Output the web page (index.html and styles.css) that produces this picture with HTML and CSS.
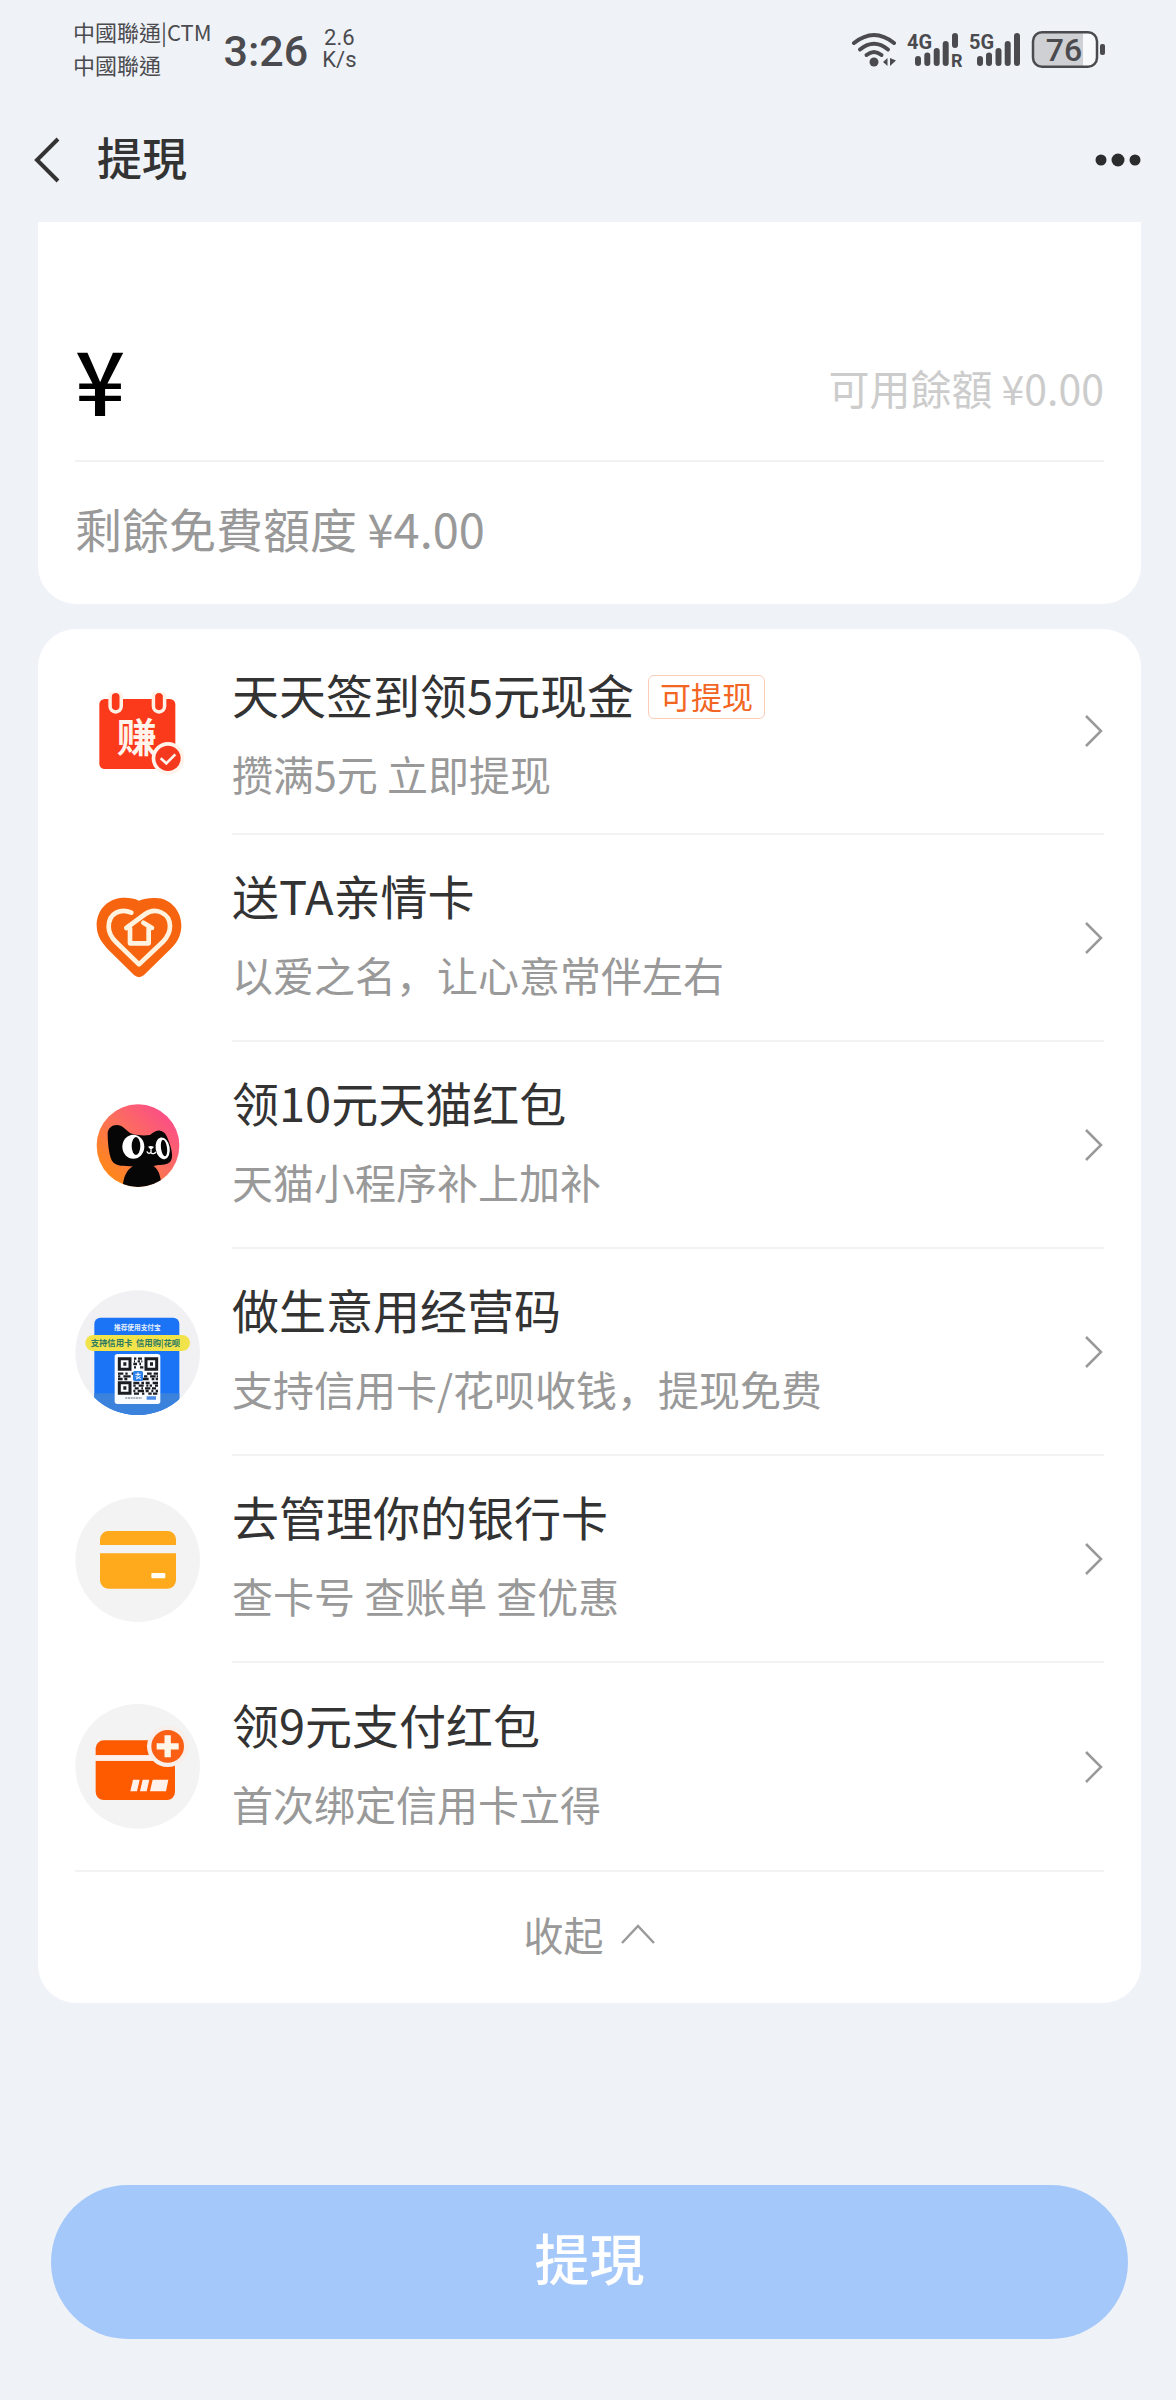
FILE: index.html
```html
<!DOCTYPE html>
<html lang="zh-Hant">
<head>
<meta charset="utf-8">
<meta name="viewport" content="width=device-width, initial-scale=1">
<title>提現</title>
<link rel="stylesheet" href="styles.css">
</head>
<body>
<div class="page">
  <div class="status">
    <div class="carriers"><span>中國聯通|CTM</span><span>中國聯通</span></div>
    <time class="clock">3:26</time>
    <div class="speed">2.6<br>K/s</div>
    <svg class="status-icons" viewBox="850 28 256 42" width="256" height="42" role="img" aria-label="Wi-Fi, 4G, 5G, 76%">
      <g fill="none" stroke="#4b4b4f" stroke-width="4" stroke-linecap="round">
        <path d="M854 43Q874 27 894 43"/>
        <path d="M860 49.500Q874 38 888 49.500"/>
        <path d="M866.500 55Q874 49 881.500 55"/>
      </g>
      <g fill="#4b4b4f">
        <circle cx="874" cy="62" r="4.500"/>
        <path d="M883 62l4.500-4v8zM896 60.500l-6 5.500v-8z"/>
      </g>
      <g stroke="#4b4b4f" stroke-width="6" stroke-linecap="round">
        <path d="M918 59v4M927.300 55.500v7.500M936.700 51v12M945.700 44v19M955 36v9"/>
        <path d="M980 59v4M989 55.500v7.500M998.500 51v12M1007.700 44v19M1017 36v27"/>
      </g>
      <g class="net" fill="#4b4b4f">
        <text x="907" y="49">4G</text>
        <text x="969" y="49">5G</text>
        <text class="net-small" x="951" y="67">R</text>
      </g>
      <rect x="1033" y="32" width="64" height="35" rx="9" fill="#f8f9fb"/>
      <path d="M1042 32h41v35h-41a9 9 0 0 1-9-9V41a9 9 0 0 1 9-9z" fill="#cfd0d3"/>
      <rect x="1033" y="32.300" width="64" height="34.500" rx="9" fill="none" stroke="#4b4b4f" stroke-width="2.500"/>
      <rect x="1100" y="44" width="5" height="11" rx="2" fill="#4b4b4f"/>
      <text class="level" x="1064" y="61" fill="#4b4b4f" text-anchor="middle">76</text>
    </svg>
  </div>

  <header class="nav">
    <button class="icon-button" type="button" aria-label="返回">
      <svg width="28" height="48" viewBox="0 0 28 48"><path d="M25 3L4 24l21 21" fill="none" stroke="#333" stroke-width="4"/></svg>
    </button>
    <h1 class="nav-title">提現</h1>
    <button class="icon-button" type="button" aria-label="更多">
      <svg width="46" height="14" viewBox="0 0 46 14" fill="#2b2c2e"><circle cx="6" cy="7" r="5.500"/><circle cx="23" cy="7" r="6.500"/><circle cx="40" cy="7" r="5.500"/></svg>
    </button>
  </header>

  <main class="content">
    <section class="card amount-card">
      <div class="amount">
        <label class="yen" for="amount">¥</label>
        <input class="amount-input" id="amount" type="text" inputmode="decimal" autocomplete="off">
        <span class="balance">可用餘額 ¥0.00</span>
      </div>
      <p class="quota">剩餘免費額度 ¥4.00</p>
    </section>

    <section class="card list-card" lang="zh-Hans">
      <ul class="list">
        <li><a class="item" href="#signin">
          <svg class="item-icon" viewBox="45 25 375 375" aria-hidden="true">
            <rect x="118" y="112" width="228" height="210" rx="16" fill="#fb3a1c"/>
            <g fill="none" stroke-linecap="round">
              <path d="M167 106v28M297 106v28" stroke="#fff1e6" stroke-width="44"/>
              <path d="M167 106v28M297 106v28" stroke="#fb3a1c" stroke-width="23"/>
            </g>
            <path d="M135 60h190v32H135z" fill="#fff"/>
            <path d="M156 106a11 11 0 0 1 22 0zM286 106a11 11 0 0 1 22 0z" fill="#fb3a1c"/>
            <text class="earn" x="230" y="270" text-anchor="middle" fill="#fff4ec">赚</text>
            <circle cx="324" cy="290" r="49" fill="#fff4ec"/>
            <circle cx="324" cy="290" r="38" fill="#f5391f"/>
            <path d="M302 290l17 15 27-27" fill="none" stroke="#fff4ec" stroke-width="8"/>
          </svg>
          <div class="item-main">
            <div class="item-text item-text-tagged">
              <div class="item-head"><span class="item-title">天天签到领5元现金</span><span class="tag">可提现</span></div>
              <span class="item-sub">攒满5元 立即提现</span>
            </div>
            <svg class="arrow" viewBox="0 0 20 34" aria-hidden="true"><path d="M2 2l15 15L2 32"/></svg>
          </div>
        </a></li>

        <li><a class="item" href="#family">
          <svg class="item-icon" viewBox="45 646 375 375" aria-hidden="true">
            <path d="M237 720C220 711 198 710 180 712C138 718 110 752 110 794C110 824 124 844 142 864L222 943Q237 956 252 943L334 863C352 845 364 824 364 794C364 750 330 712 288 712C270 711 252 713 237 720Z" fill="#f7640f"/>
            <g fill="none" stroke="#fff3df" stroke-width="14" stroke-linecap="round" stroke-linejoin="round">
              <path d="M214 756C184 742 146 756 146 798C146 820 158 834 168 844L237 911L308 844C320 832 330 818 330 796C330 758 286 738 256 760L199 802"/>
              <path d="M210 802v46h56v-46h10L250 786"/>
            </g>
          </svg>
          <div class="item-main">
            <div class="item-text">
              <span class="item-title">送TA亲情卡</span>
              <span class="item-sub">以爱之名，让心意常伴左右</span>
            </div>
            <svg class="arrow" viewBox="0 0 20 34" aria-hidden="true"><path d="M2 2l15 15L2 32"/></svg>
          </div>
        </a></li>

        <li><a class="item" href="#tmall">
          <svg class="item-icon" viewBox="45 38 375 375" aria-hidden="true">
            <defs>
              <linearGradient id="sunset" x1="0" y1="1" x2="1" y2="0"><stop offset=".1" stop-color="#ff8a10"/><stop offset=".5" stop-color="#fc705a"/><stop offset=".85" stop-color="#fb5085"/></linearGradient>
              <clipPath id="cat-clip"><circle cx="234" cy="226" r="124"/></clipPath>
            </defs>
            <circle cx="234" cy="226" r="124" fill="url(#sunset)"/>
            <g clip-path="url(#cat-clip)">
              <path d="M143 188C145 168 165 158 184 167C199 176 205 188 218 191C238 196 254 196 270 194C281 187 287 179 300 181C317 184 321 198 327 214C335 235 342 264 329 276C318 286 298 282 281 287C298 300 304 322 304 356H188C189 323 198 301 218 288C194 287 166 290 155 270C146 250 143 214 143 188Z" fill="#070606"/>
              <ellipse cx="220" cy="229" rx="33" ry="36" fill="#fff"/>
              <ellipse cx="308" cy="234" rx="21" ry="33" fill="#fff" transform="rotate(-10 308 234)"/>
              <ellipse cx="228" cy="227" rx="13" ry="27" fill="#070606"/>
              <ellipse cx="312" cy="233" rx="9" ry="25" fill="#070606" transform="rotate(-8 312 233)"/>
              <path d="M264 229q9-5 18 1l-9 9z" fill="#fff"/>
              <path d="M273 238v9M261 243q2 9 12 4q8 7 15-2" fill="none" stroke="#fff" stroke-width="4"/>
            </g>
          </svg>
          <div class="item-main">
            <div class="item-text">
              <span class="item-title">领10元天猫红包</span>
              <span class="item-sub">天猫小程序补上加补</span>
            </div>
            <svg class="arrow" viewBox="0 0 20 34" aria-hidden="true"><path d="M2 2l15 15L2 32"/></svg>
          </div>
        </a></li>

        <li><a class="item" href="#merchant">
          <svg class="item-icon" viewBox="45 660 375 375" aria-hidden="true">
            <defs><clipPath id="code-clip"><circle cx="233" cy="848" r="187"/></clipPath></defs>
            <circle cx="233" cy="848" r="187" fill="#f1f1f4"/>
            <g clip-path="url(#code-clip)">
              <rect x="103" y="743" width="255" height="310" rx="18" fill="#1b74f6"/>
              <path d="M103 970h255v80H103z" fill="#3a82dc"/>
              <text class="code-top" x="232" y="779" text-anchor="middle" fill="#e6f0ff">推荐使用支付宝</text>
              <rect x="76" y="795" width="314" height="48" rx="24" fill="#f3e34a"/>
              <text class="code-band" x="92" y="829" fill="#2c7a62">支持信用卡</text>
              <text class="code-band" x="228" y="829" fill="#2c7a62">信用购|花呗</text>
              <rect x="164" y="852" width="137" height="150" rx="8" fill="#f8fbff"/>
              <g fill="none" stroke="#1c1d22" stroke-width="9">
                <path d="M178 866h32v32h-32zM258 866h32v32h-32zM178 938h32v32h-32z"/>
                <path d="M190 882h9M270 882h9M190 954h9" stroke-width="11"/>
              </g>
              <g fill="none" stroke="#1c1d22" stroke-width="7">
                <path d="M222 866h28" stroke-dasharray="7 5 12 4"/>
                <path d="M222 874h28" stroke-dasharray="3 8 7 4"/>
                <path d="M220 882h30" stroke-dasharray="11 7 5 7"/>
                <path d="M222 892h28" stroke-dasharray="6 12 10"/>
                <path d="M174 911h120" stroke-dasharray="16 6 7 12 22 24 14 6"/>
                <path d="M174 919h120" stroke-dasharray="7 9 22 40 10 8 17 3"/>
                <path d="M174 927h120" stroke-dasharray="14 5 9 45 19 9 8 4"/>
                <path d="M220 939h74" stroke-dasharray="18 6 8 5 12 9"/>
                <path d="M220 947h74" stroke-dasharray="7 9 15 8 6 4"/>
                <path d="M224 955h70" stroke-dasharray="12 8 5 6 16 5"/>
                <path d="M220 963h74" stroke-dasharray="6 7 19 5 9 8"/>
                <path d="M222 971h70" stroke-dasharray="15 9 7 12 10 4"/>
              </g>
              <rect x="219" y="903" width="30" height="30" rx="5" fill="#2a80e8"/>
              <path d="M226 913h16M234 907v11M228 927q10-3 13-9M227 920q7 0 16 7" stroke="#fff" stroke-width="3" fill="none"/>
              <path d="M196 984h50" stroke="#8c97a8" stroke-width="5" stroke-dasharray="6 2"/>
              <path d="M260 984h28" stroke="#4a8ce8" stroke-width="10"/>
            </g>
          </svg>
          <div class="item-main">
            <div class="item-text">
              <span class="item-title">做生意用经营码</span>
              <span class="item-sub">支持信用卡/花呗收钱，提现免费</span>
            </div>
            <svg class="arrow" viewBox="0 0 20 34" aria-hidden="true"><path d="M2 2l15 15L2 32"/></svg>
          </div>
        </a></li>

        <li><a class="item" href="#cards">
          <svg class="item-icon" viewBox="45 50 375 375" aria-hidden="true">
            <circle cx="233" cy="238" r="187" fill="#f3f3f3"/>
            <path d="M120 194v-17a25 25 0 0 1 25-25h178a25 25 0 0 1 25 25v17zM120 219h228v81a25 25 0 0 1-25 25H145a25 25 0 0 1-25-25z" fill="#ffaa1c"/>
            <rect x="274" y="278" width="42" height="16" rx="3" fill="#fffdf5"/>
          </svg>
          <div class="item-main">
            <div class="item-text">
              <span class="item-title">去管理你的银行卡</span>
              <span class="item-sub">查卡号 查账单 查优惠</span>
            </div>
            <svg class="arrow" viewBox="0 0 20 34" aria-hidden="true"><path d="M2 2l15 15L2 32"/></svg>
          </div>
        </a></li>

        <li><a class="item" href="#bonus">
          <svg class="item-icon" viewBox="45 674 375 375" aria-hidden="true">
            <circle cx="233" cy="861" r="187" fill="#f3f3f3"/>
            <path d="M107 828v-21a24 24 0 0 1 24-24h190a24 24 0 0 1 24 24v21z" fill="#fe5a00"/>
            <path d="M107 844h238v94a24 24 0 0 1-24 24H131a24 24 0 0 1-24-24z" fill="#fe5a00"/>
            <path d="M107 828h238v16H107z" fill="#fff2ec"/>
            <path d="M219 901h20l-8 35h-20zM248 901h20l-8 35h-20zM278 901h47l-7 35h-48z" fill="#fff2ec"/>
            <circle cx="323" cy="801" r="62" fill="#f8eeea"/>
            <circle cx="323" cy="801" r="49" fill="#fa5f14"/>
            <path d="M323 768v66M290 801h66" stroke="#fff6ea" stroke-width="19"/>
          </svg>
          <div class="item-main">
            <div class="item-text">
              <span class="item-title">领9元支付红包</span>
              <span class="item-sub">首次绑定信用卡立得</span>
            </div>
            <svg class="arrow" viewBox="0 0 20 34" aria-hidden="true"><path d="M2 2l15 15L2 32"/></svg>
          </div>
        </a></li>
      </ul>
      <button class="collapse" type="button">收起
        <svg width="36" height="22" viewBox="0 0 36 22" aria-hidden="true"><path d="M2 20L18 3l16 17"/></svg>
      </button>
    </section>
  </main>

  <footer class="footer"><button class="submit" type="button">提現</button></footer>
</div>
</body>
</html>
```
FILE: styles.css
```css
* { box-sizing: border-box; }

body {
  margin: 0;
  background: #eff3f8;
  color: #333;
  font-family: "Noto Sans CJK SC", sans-serif;
}

:lang(zh-Hant) { font-family: "Noto Sans CJK TC", sans-serif; }
:lang(zh-Hans) { font-family: "Noto Sans CJK SC", sans-serif; }

button, input {
  margin: 0;
  padding: 0;
  border: 0;
  background: none;
  color: inherit;
  font-size: inherit;
}

svg { display: block; flex: none; }

.page {
  display: flex;
  flex-direction: column;
  min-height: 100vh;
}

/* status bar */
.status {
  display: flex;
  align-items: center;
  height: 98px;
  padding: 0 70px 0 73px;
  color: #4b4b4f;
}

.carriers {
  display: flex;
  flex-direction: column;
  padding-bottom: 2px;
  font-size: 22px;
  line-height: 33px;
}

.clock {
  margin-left: 12px;
  padding-top: 4px;
  font-family: Roboto, sans-serif;
  font-size: 43px;
  font-weight: 500;
  line-height: 60px;
}

.speed {
  margin-left: 14px;
  font-family: Roboto, sans-serif;
  font-size: 22px;
  line-height: 22px;
  text-align: center;
}

.status-icons { margin-left: auto; }

.net text {
  font-family: Roboto, sans-serif;
  font-size: 20px;
  font-weight: 700;
}

.net .net-small { font-size: 18px; }

.level {
  font-family: Roboto, sans-serif;
  font-size: 32px;
  font-weight: 500;
}

/* title bar */
.nav {
  display: flex;
  align-items: center;
  height: 124px;
  padding: 0 35px 0 33px;
}

.nav-title {
  flex: 1;
  margin: 0 0 0 36px;
  padding-bottom: 6px;
  font-size: 45px;
  font-weight: 500;
  line-height: 60px;
}

/* cards */
.content {
  display: flex;
  flex-direction: column;
  gap: 25px;
  padding: 0 35px 0 38px;
}

.card {
  padding: 0 37px;
  border-radius: 38px;
  background: #fff;
}

.amount-card {
  border-top-left-radius: 0;
  border-top-right-radius: 0;
}

.amount {
  display: flex;
  align-items: flex-end;
  padding: 111px 0 37px;
  border-bottom: 2px solid #f2f2f2;
}

.yen {
  color: #000;
  font-size: 88px;
  font-weight: 500;
  line-height: 90px;
}

.amount-input {
  flex: 1;
  min-width: 0;
  height: 90px;
  font-size: 88px;
  outline: 0;
}

.balance {
  color: #ccc;
  font-size: 41px;
  line-height: 72px;
}

.quota {
  margin: 0;
  padding: 36px 0 46px;
  color: #999;
  font-size: 47px;
  line-height: 60px;
}

/* list */
.list {
  margin: 0;
  padding: 0;
  list-style: none;
}

.item {
  display: flex;
  align-items: stretch;
  gap: 32px;
  height: 207px;
  color: inherit;
  text-decoration: none;
}

li:first-child .item { height: 206px; }

.item-icon {
  align-self: center;
  width: 125px;
  height: 125px;
}

.item-main {
  display: flex;
  flex: 1;
  align-items: center;
  justify-content: space-between;
  border-bottom: 2px solid #f2f2f2;
}

li:last-child .item-main { border-bottom: 0; }

.item-text {
  display: flex;
  flex-direction: column;
  gap: 24px;
  padding-bottom: 12px;
}

.item-text-tagged { padding-bottom: 0; }

.item-head {
  display: flex;
  align-items: center;
  gap: 14px;
}

.item-title {
  font-size: 47px;
  line-height: 60px;
}

.item-sub {
  color: #999;
  font-size: 41px;
  line-height: 50px;
}

.tag {
  margin-top: 5px;
  padding: 0 11px 2px;
  border: 1px solid #fbcdb6;
  border-radius: 6px;
  color: #f26522;
  font-size: 31px;
  line-height: 40px;
}

.arrow {
  width: 20px;
  height: 34px;
  fill: none;
  stroke: #999;
  stroke-width: 2.500;
}

.earn { font-size: 120px; font-weight: 700; }
.code-top { font-size: 20px; font-weight: 700; }
.code-band { font-size: 25px; font-weight: 700; }

.collapse {
  display: flex;
  align-items: center;
  justify-content: center;
  gap: 16px;
  width: 100%;
  height: 133px;
  padding-bottom: 8px;
  border-top: 2px solid #f2f2f2;
  color: #999;
  font-size: 40px;
}

.collapse svg {
  fill: none;
  stroke: #999;
  stroke-width: 2.500;
}

/* main action */
.footer {
  margin-top: auto;
  padding: 60px 48px 61px 51px;
}

.submit {
  width: 100%;
  height: 154px;
  padding-bottom: 12px;
  border-radius: 77px;
  background: #a5c8fa;
  color: #fff;
  font-size: 55px;
  font-weight: 500;
}
```
